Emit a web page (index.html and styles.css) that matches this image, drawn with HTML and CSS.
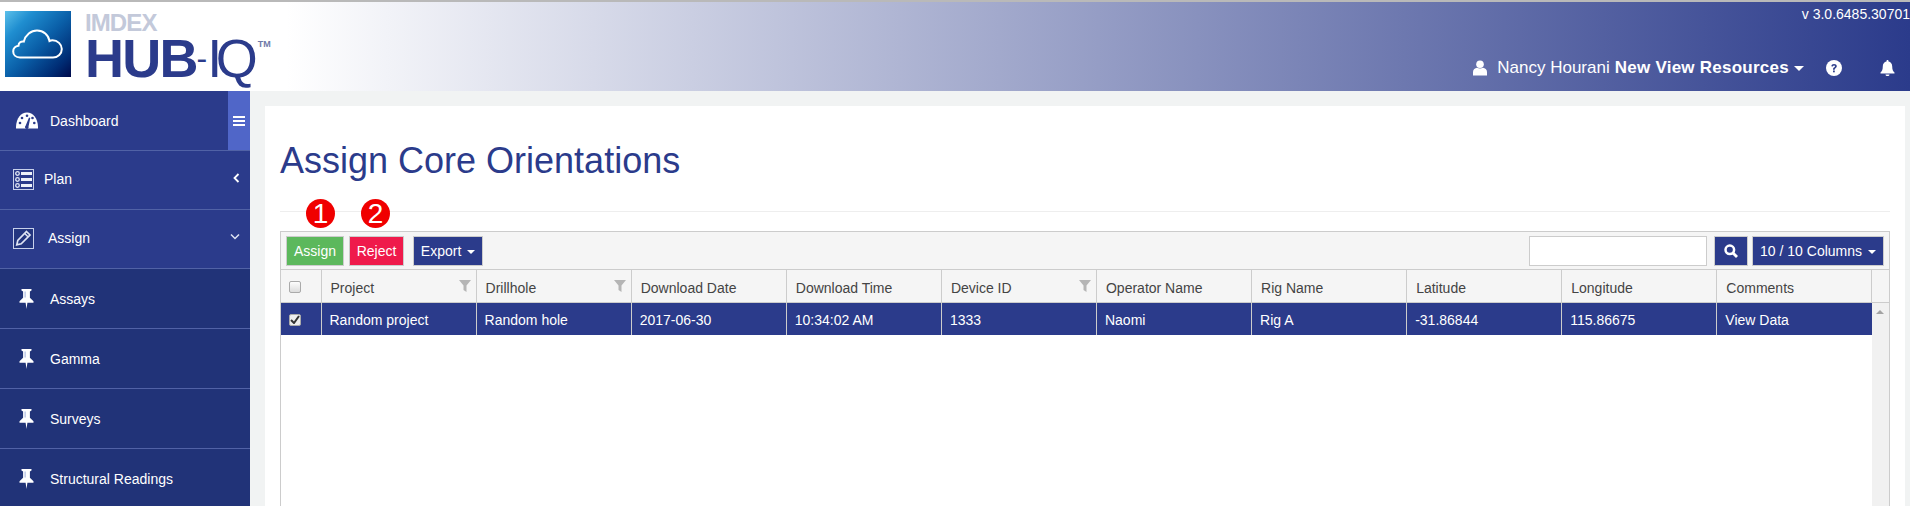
FILE: index.html
```html
<!DOCTYPE html>
<html lang="en">
<head>
<meta charset="utf-8">
<title>Assign Core Orientations</title>
<link rel="stylesheet" href="styles.css">
</head>
<body>
<svg class="defs" width="0" height="0" aria-hidden="true">
  <symbol id="pin" viewBox="0 0 15 20"><path d="M2.500 0h10v1.600l-1.600 1v6.200l3.600 3.400v1.600H8.400L7.500 20l-.9-6.200H.5v-1.600l3.600-3.400V2.600l-1.600-1z" fill="#fff"/><path d="M5.600 2.600h1v6h-1z" fill="#9fb0dc"/></symbol>
  <symbol id="filter" viewBox="0 0 12 12"><path d="M0 0h12L7.500 5.500V12L4.500 10V5.500z" fill="#b5b5b5"/></symbol>
</svg>
<header class="topbar">
  <div class="brand">
    <div class="logo-tile">
      <svg width="52" height="30" viewBox="0 0 52 30"><path d="M8 28.500C3.500 28.500 1.200 25.500 1.200 22.500c0-3.200 2.300-5.500 5.300-5.800 0-2.800 2.500-4.800 5.300-4.200C13.500 6 19 1.500 25 1.500c6.500 0 11.500 4.500 12.500 10.500 1-.5 2-.7 3-.7 5 0 9.300 4 9.300 8.700s-3.800 8.500-8.800 8.500z" fill="none" stroke="#fff" stroke-width="2"/></svg>
    </div>
    <div class="wordmark">
      <div class="imdex">IMDEX</div>
      <div class="hub"><b>HUB</b><span class="hub-dash">-</span><span class="hub-i">I</span><span class="hub-q">Q</span><sup class="tm">TM</sup></div>
    </div>
  </div>
  <div class="top-right">
    <div class="version">v 3.0.6485.30701</div>
    <div class="usernav">
      <svg class="i-user" width="16" height="16" viewBox="0 0 16 16"><circle cx="8" cy="4.300" r="3.800" fill="#fff"/><path d="M1 15.500v-3.500c0-2.500 2-3.800 4-4.200 1.800 1 4.200 1 6 0 2 .4 4 1.700 4 4.200v3.500z" fill="#fff"/></svg>
      <span class="username">Nancy Hourani</span>
      <b class="org">New View Resources</b>
      <span class="caret caret-user"></span>
      <svg class="i-help" width="16" height="16" viewBox="0 0 16 16"><circle cx="8" cy="8" r="8" fill="#fff"/><path d="M5.300 6.200C5.500 4.700 6.600 4 8 4c1.600 0 2.800 .9 2.800 2.300 0 1.900-2.100 1.900-2.100 3.400H7c0-2.400 2-2.300 2-3.400 0-.5-.4-.9-1-.9s-1 .3-1.100 1z" fill="#2f3f8c"/><rect x="7" y="10.500" width="1.800" height="1.800" fill="#2f3f8c"/></svg>
      <svg class="i-bell" width="15" height="16" viewBox="0 0 15 16"><path d="M7.500 0c.6 0 1 .4 1 1v.6c2.300.5 3.700 2.400 3.700 4.700 0 3.500.8 4.800 2.300 6.200v.9H.5v-.9C2 11.100 2.800 9.800 2.800 6.300c0-2.300 1.400-4.200 3.700-4.700V1c0-.6.400-1 1-1zM5.500 14.500h4c0 1-.9 1.500-2 1.500s-2-.5-2-1.500z" fill="#fff"/></svg>
    </div>
  </div>
</header>
<div class="shell">
  <nav class="sidebar">
    <a class="nav-item nav-dash">
      <svg class="nav-ic-dash" width="22" height="17" viewBox="0 0 22 17"><path d="M0 16.500C-.3 7 4.500 .5 11 .5S22.300 7 22 16.500z" fill="#fff"/><g fill="#2b3b8b"><circle cx="4" cy="11" r="1.300"/><circle cx="6" cy="6" r="1.300"/><circle cx="11" cy="3.800" r="1.300"/><circle cx="16.500" cy="6" r="1.300"/><circle cx="18.300" cy="11" r="1.300"/><path d="M13 5.500l1.300.5-1.800 8.500a1.800 1.800 0 1 1-3-.6z"/></g></svg>
      <span>Dashboard</span>
      <span class="nav-toggle"><i></i><i></i><i></i></span>
    </a>
    <a class="nav-item nav-plan">
      <svg class="nav-box" width="21" height="21" viewBox="0 0 21 21"><rect x=".5" y=".5" width="20" height="20" fill="none" stroke="#c7d0ea"/><g fill="none" stroke="#dfe4f3" stroke-width="1.300"><circle cx="4.500" cy="4.500" r="1.800"/><circle cx="4.500" cy="10.500" r="1.800"/><circle cx="4.500" cy="16.500" r="1.800"/></g><path d="M8 3h11v3H8zM8 9h11v3H8zM8 15h11v3H8z" fill="#eef1fa"/></svg>
      <span>Plan</span>
      <svg class="chev" width="7" height="10" viewBox="0 0 7 10"><path d="M5.500 1L1.500 5l4 4" fill="none" stroke="#fff" stroke-width="1.800"/></svg>
    </a>
    <a class="nav-item nav-assign">
      <svg class="nav-box" width="21" height="21" viewBox="0 0 21 21"><rect x=".5" y=".5" width="20" height="20" fill="#24367f" stroke="#c7d0ea"/><path d="M13.500 3.500l3.500 3.500-8.800 8.800-4.400 1 1-4.500z" fill="none" stroke="#dfe4f3" stroke-width="1.700"/><path d="M11.700 5.500l3.300 3.300" stroke="#dfe4f3" stroke-width="1.500"/></svg>
      <span>Assign</span>
      <svg class="chev chev-down" width="10" height="7" viewBox="0 0 10 7"><path d="M1 1.500l4 4 4-4" fill="none" stroke="#dfe4f3" stroke-width="1.500"/></svg>
    </a>
    <a class="nav-item nav-sub"><svg class="pin" width="15" height="20"><use href="#pin"/></svg><span>Assays</span></a>
    <a class="nav-item nav-sub"><svg class="pin" width="15" height="20"><use href="#pin"/></svg><span>Gamma</span></a>
    <a class="nav-item nav-sub"><svg class="pin" width="15" height="20"><use href="#pin"/></svg><span>Surveys</span></a>
    <a class="nav-item nav-sub"><svg class="pin" width="15" height="20"><use href="#pin"/></svg><span>Structural Readings</span></a>
  </nav>
  <main class="content">
    <section class="card">
      <h1 class="title">Assign Core Orientations</h1>
      <hr class="rule">
      <div class="panel">
        <span class="badge badge-one">1</span>
        <span class="badge badge-two">2</span>
        <div class="toolbar">
          <button class="btn btn-green">Assign</button>
          <button class="btn btn-red">Reject</button>
          <button class="btn btn-navy btn-export">Export <span class="caret"></span></button>
          <div class="toolbar-right">
            <input class="search" type="text" aria-label="Search">
            <button class="btn btn-navy btn-search"><svg width="14" height="14" viewBox="0 0 14 14"><circle cx="5.800" cy="5.800" r="4.300" fill="none" stroke="#fff" stroke-width="2.500"/><path d="M9 9l4 4" stroke="#fff" stroke-width="2.800"/></svg></button>
            <button class="btn btn-navy btn-columns">10 / 10 Columns <span class="caret"></span></button>
          </div>
        </div>
        <div class="row head">
          <div class="cell cell-check"><span class="check"></span></div>
          <div class="cell">Project<svg class="filter" width="12" height="12"><use href="#filter"/></svg></div>
          <div class="cell">Drillhole<svg class="filter" width="12" height="12"><use href="#filter"/></svg></div>
          <div class="cell">Download Date</div>
          <div class="cell">Download Time</div>
          <div class="cell">Device ID<svg class="filter" width="12" height="12"><use href="#filter"/></svg></div>
          <div class="cell">Operator Name</div>
          <div class="cell">Rig Name</div>
          <div class="cell">Latitude</div>
          <div class="cell">Longitude</div>
          <div class="cell">Comments</div>
          <div class="cell cell-gutter"></div>
        </div>
        <div class="table-body">
          <div class="rows">
            <div class="row selected">
              <div class="cell cell-check"><span class="check checked"><svg width="10" height="9" viewBox="0 0 10 9"><path d="M1 5l3 3 5-7" fill="none" stroke="#333" stroke-width="2"/></svg></span></div>
              <div class="cell">Random project</div>
              <div class="cell">Random hole</div>
              <div class="cell">2017-06-30</div>
              <div class="cell">10:34:02 AM</div>
              <div class="cell">1333</div>
              <div class="cell">Naomi</div>
              <div class="cell">Rig A</div>
              <div class="cell">-31.86844</div>
              <div class="cell">115.86675</div>
              <div class="cell">View Data</div>
            </div>
          </div>
          <div class="scrollbar"><span class="scroll-up"></span></div>
        </div>
      </div>
    </section>
  </main>
</div>
</body>
</html>
```
FILE: styles.css
```css
* { box-sizing: border-box; }
html, body { margin: 0; height: 506px; overflow: hidden; }
body { font-family: "Liberation Sans", Arial, sans-serif; font-size: 14px; color: #333; background: #f1f3f3; }
.defs { position: absolute; }

.topbar {
  height: 91px;
  display: flex;
  justify-content: space-between;
  border-top: 2px solid #b9b9b9;
  background: linear-gradient(to right, #fff 15%, #2b3b8b 100%);
}
.brand { display: flex; padding: 9px 0 0 5px; }
.logo-tile {
  width: 66px; height: 66px;
  display: flex; align-items: center; justify-content: center;
  background: linear-gradient(135deg, #5cc0ea 0%, #1f8ed0 22%, #0a5fa8 52%, #002d75 82%, #000a4a 100%);
}
.wordmark { margin-left: 14px; }
.imdex { font-size: 24px; font-weight: bold; line-height: 24px; color: #c3c9da; letter-spacing: -.9px; height: 24px; }
.hub { display: flex; align-items: flex-start; height: 47px; line-height: 47px; font-size: 54px; color: #2b3b8b; }
.hub b { font-weight: bold; letter-spacing: -1.800px; }
.hub-dash { font-size: 32px; }
.hub-i { letter-spacing: -6.500px; }
.tm { font-size: 9px; line-height: 12px; font-weight: bold; color: #6f7aa8; margin: 3px 0 0; }

.top-right { display: flex; flex-direction: column; align-items: flex-end; color: #fff; }
.version { font-size: 14px; line-height: 15px; padding-top: 5px; }
.usernav { display: flex; align-items: center; margin-top: 36px; font-size: 17px; line-height: 20px; padding-right: 15px; }
.i-user { margin-right: 9px; }
.username { margin-right: 5px; }
.org { letter-spacing: .25px; }
.caret { display: inline-block; width: 0; height: 0; border-left: 4px solid transparent; border-right: 4px solid transparent; border-top: 4px solid #fff; vertical-align: middle; margin-left: 2px; }
.caret-user { border-left-width: 5px; border-right-width: 5px; border-top-width: 5px; margin-left: 5px; }
.i-help { margin-left: 22px; }
.i-bell { margin-left: 38px; }

.shell { display: flex; height: 415px; overflow: hidden; }
.sidebar { width: 250px; flex: none; background: #2b3b8b; overflow: hidden; }
.nav-item {
  position: relative; display: flex; align-items: center;
  color: #fff; font-size: 14px;
  border-bottom: 1px solid #5162a6;
}
.nav-dash { height: 60px; padding-left: 16px; }
.nav-ic-dash { margin-right: 12px; }
.nav-toggle { position: absolute; right: 0; top: 0; bottom: 0; width: 22px; background: #5066c8; display: flex; flex-direction: column; align-items: center; justify-content: center; gap: 2px; }
.nav-toggle i { display: block; width: 12px; height: 2px; background: #fff; }
.nav-plan { height: 59px; padding: 0 0 2px 13px; }
.nav-plan .nav-box { margin-right: 10px; }
.nav-assign { height: 59px; padding: 0 0 2px 13px; }
.nav-assign .nav-box { margin-right: 14px; }
.chev { position: absolute; right: 10px; top: 22px; }
.chev-down { right: 10px; top: 23px; }
.nav-sub { height: 60px; padding-left: 19px; background: #213378; }
.pin { margin-right: 16px; }

.content { flex: 1; padding: 15px 5px 0 15px; min-width: 0; }
.card { background: #fff; height: 400px; padding: 0 15px; }
.title { margin: 0; padding-top: 35px; font-size: 36px; line-height: 40px; font-weight: normal; color: #2b3b8b; }
.rule { margin: 30px 0 0; height: 1px; border: 0; background: #eee; }
.panel { position: relative; margin-top: 19px; border: 1px solid #ccc; border-bottom: 0; height: 300px; }
.badge { position: absolute; top: -33px; width: 29px; height: 29px; border-radius: 50%; background: #f00000; color: #fff; font-size: 28px; line-height: 29px; text-align: center; }
.badge-one { left: 25px; }
.badge-two { left: 80px; }

.toolbar { display: flex; align-items: center; height: 38px; padding: 0 5px; background: #f5f5f5; border-bottom: 1px solid #ccc; }
.btn { height: 30px; margin: 0; padding: 0; border: 1px solid #ccc; color: #fff; font: 14px "Liberation Sans", Arial, sans-serif; white-space: nowrap; }
.btn-green { width: 58px; background: #5cb85c; }
.btn-red { width: 55px; margin-left: 5px; background: #ef1a4b; }
.btn-navy { background: #2b3b8b; }
.btn-export { width: 70px; margin-left: 9px; }
.toolbar-right { margin-left: auto; display: flex; align-items: center; }
.search { width: 178px; height: 30px; padding: 0; border: 1px solid #ccc; background: #fff; }
.btn-search { width: 34px; margin-left: 7px; display: flex; align-items: center; justify-content: center; }
.btn-columns { width: 132px; margin-left: 4px; }

.row { display: grid; grid-template-columns: 40.500px repeat(10, 155.100px); }
.head { height: 33px; grid-template-columns: 40.500px repeat(10, 155.100px) 1fr; background: #f5f5f5; border-bottom: 1px solid #ccc; }
.cell { position: relative; display: flex; align-items: center; padding: 1px 0 0 8px; border-right: 1px solid #ccc; min-width: 0; white-space: nowrap; font-size: 14px; color: #444; }
.head .cell { padding: 4px 0 0 9px; }
.head .cell-check { padding: 1px 0 0 8px; }
.cell-gutter { border-right: 0; }
.filter { position: absolute; right: 5px; top: 10px; }
.check { width: 12px; height: 12px; border: 1px solid #aaa; border-radius: 2px; background: linear-gradient(#fdfdfd, #dcdcdc); display: flex; align-items: center; justify-content: center; }
.checked { background: #eee; }

.table-body { display: flex; height: 228px; }
.rows { flex: 1; min-width: 0; }
.selected { height: 32px; background: #2b3b8b; }
.selected .cell { color: #fff; border-right-color: #ccc; }
.selected .cell:last-child { border-right: 0; }
.scrollbar { width: 17px; flex: none; background: #f1f1f1; position: relative; }
.scroll-up { position: absolute; left: 4px; top: 7px; width: 0; height: 0; border-left: 4px solid transparent; border-right: 4px solid transparent; border-bottom: 4px solid #a3a3a3; }
```
